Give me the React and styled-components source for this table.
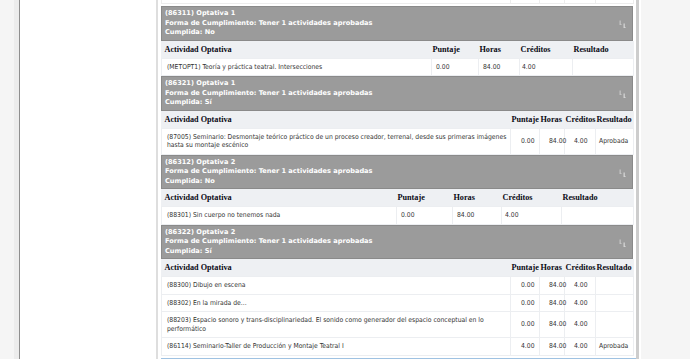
import styled, { createGlobalStyle } from "styled-components";

const GlobalStyle = createGlobalStyle`
  html, body {
    margin: 0;
    padding: 0;
    height: 100%;
    overflow: hidden;
    background: #f5f5f5;
  }
`;

const WIDE = [349, 29, 25, 31, 38];

const groups = [
  {
    code: "86311",
    name: "Optativa 1",
    done: "No",
    cols: [270, 47, 41, 53, 61],
    pads: [5, 4, 4, 2, 4],
    rows: [["(METOPT1) Teoría y práctica teatral. Intersecciones", "0.00", "84.00", "4.00", ""]],
  },
  {
    code: "86321",
    name: "Optativa 1",
    done: "Sí",
    cols: WIDE,
    pads: [5, 10, 9, 9, 3],
    rows: [
      [
        "(87005) Seminario: Desmontaje teórico práctico de un proceso creador, terrenal, desde sus primeras imágenes hasta su montaje escénico",
        "0.00",
        "84.00",
        "4.00",
        "Aprobada",
      ],
    ],
  },
  {
    code: "86312",
    name: "Optativa 2",
    done: "No",
    cols: [235, 56, 49, 60, 72],
    pads: [5, 4, 4, 3, 4],
    rows: [["(88301) Sin cuerpo no tenemos nada", "0.00", "84.00", "4.00", ""]],
  },
  {
    code: "86322",
    name: "Optativa 2",
    done: "Sí",
    cols: WIDE,
    pads: [5, 10, 9, 9, 3],
    rows: [
      ["(88300) Dibujo en escena", "0.00", "84.00", "4.00", ""],
      ["(88302) En la mirada de...", "0.00", "84.00", "4.00", ""],
      [
        "(88203) Espacio sonoro y trans-disciplinariedad. El sonido como generador del espacio conceptual en lo performático",
        "0.00",
        "84.00",
        "4.00",
        "",
      ],
      ["(86114) Seminario-Taller de Producción y Montaje Teatral I", "4.00", "84.00", "4.00", "Aprobada"],
    ],
  },
];

const headings = ["Actividad Optativa", "Puntaje", "Horas", "Créditos", "Resultado"];

function ExpandIcon() {
  return (
    <svg width="8" height="9" viewBox="0 0 8 9">
      <path d="M0.5 0.5h1.3v3.2L3 5H0.5z" fill="#c4c4c4" />
      <path d="M4.5 3.5h1.3v3.2L7 8H4.5z" fill="#d4d4d4" />
    </svg>
  );
}

export default function App() {
  return (
    <>
      <GlobalStyle />
      <Page>
        <Gutter />
        <Frame>
          <Sidebar />
          <Content>
            <Table $stub>
              <colgroup>
                {WIDE.map((w, i) => (
                  <col key={i} style={{ width: w }} />
                ))}
              </colgroup>
              <tbody>
                <tr>
                  {WIDE.map((w, i) => (
                    <StubCell key={i} />
                  ))}
                </tr>
              </tbody>
            </Table>
            {groups.map((g) => (
              <Group key={g.code + g.done}>
                <GroupHeader>
                  <HeaderText>
                    <div>
                      ({g.code}) {g.name}
                    </div>
                    <div>Forma de Cumplimiento: Tener 1 actividades aprobadas</div>
                    <div>Cumplida: {g.done}</div>
                  </HeaderText>
                  <IconSlot>
                    <ExpandIcon />
                  </IconSlot>
                </GroupHeader>
                <Table>
                  <colgroup>
                    {g.cols.map((w, i) => (
                      <col key={i} style={{ width: w }} />
                    ))}
                  </colgroup>
                  <thead>
                    <tr>
                      {headings.map((h, i) => (
                        <HeadCell key={h} $first={i === 0}>
                          {h}
                        </HeadCell>
                      ))}
                    </tr>
                  </thead>
                  <tbody>
                    {g.rows.map((r, ri) => (
                      <tr key={ri}>
                        {r.map((c, ci) => (
                          <DataCell key={ci} style={{ paddingLeft: g.pads[ci] }}>
                            {c}
                          </DataCell>
                        ))}
                      </tr>
                    ))}
                  </tbody>
                </Table>
              </Group>
            ))}
            <BlueRule />
          </Content>
        </Frame>
      </Page>
    </>
  );
}

const Page = styled.div`
  display: flex;
  height: 359px;
  overflow: hidden;
  background: #f5f5f5;
`;

const Gutter = styled.div`
  width: 14px;
  flex-shrink: 0;
`;

const Frame = styled.div`
  display: flex;
  flex-shrink: 0;
  background: #fff;
  border-left: 5px solid #ececec;
  padding-right: 2px;
  box-shadow: inset 1px 0 0 #8f8f8f;
`;

const Sidebar = styled.div`
  width: 137px;
  flex-shrink: 0;
`;

const Content = styled.div`
  width: 472px;
  padding: 0 3px;
  border-left: 2px solid #dedede;
  border-right: 3px solid #cdcdcd;
  box-shadow: inset -1px 0 0 #fff;
`;

const Group = styled.div`
  display: flex;
  flex-direction: column;
`;

const GroupHeader = styled.div`
  display: flex;
  justify-content: space-between;
  background: #9b9b9b;
  border: 1px solid #8a8a8a;
  padding: 2px 4px 2px 3px;
`;

const HeaderText = styled.div`
  font-family: "DejaVu Sans", Verdana, sans-serif;
  font-weight: bold;
  font-size: 6.6px;
  line-height: 9.5px;
  color: #fff;
`;

const IconSlot = styled.div`
  display: flex;
  align-items: center;
  padding: 3px 1px 0 0;
`;

const Table = styled.table`
  width: 472px;
  table-layout: fixed;
  border-collapse: collapse;
  background: #eef0f3;
  margin-bottom: ${(p) => (p.$stub ? "2px" : "0")};
`;

const StubCell = styled.td`
  height: 3px;
  padding: 0;
  background: #fff;
  border: 1px solid #ededed;
  border-top: none;
`;

const HeadCell = styled.th`
  height: 17px;
  padding: 0 0 0 ${(p) => (p.$first ? "3px" : "1px")};
  text-align: left;
  font-family: "Liberation Serif", "Times New Roman", serif;
  font-weight: bold;
  font-size: 8.2px;
  color: #0a0a14;
  white-space: nowrap;
  overflow: hidden;
`;

const DataCell = styled.td`
  padding: 4px 3px 4px 4px;
  background: #fff;
  border: 1px solid #eceef1;
  font-family: "DejaVu Sans Condensed", "DejaVu Sans", sans-serif;
  font-size: 6.75px;
  line-height: 8.5px;
  color: #333;
  vertical-align: middle;
  white-space: normal;
`;

const BlueRule = styled.div`
  margin: 2px -3px 0 0;
  border-top: 2px solid #9fc2e2;
`;
